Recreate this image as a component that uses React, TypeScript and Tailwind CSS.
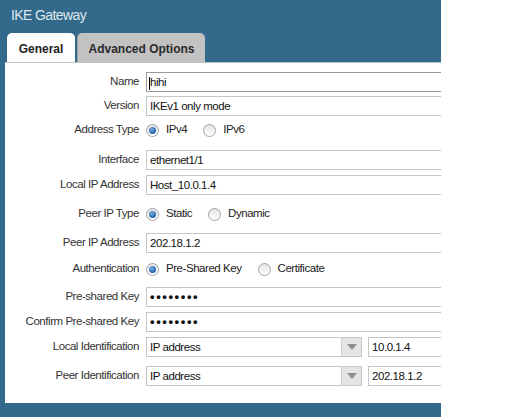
import React from "react";

const sans = "font-['Liberation_Sans',Arial,sans-serif]";

function Radio({ checked }: { checked?: boolean }) {
  return (
    <span className="flex h-[13px] w-[13px] shrink-0 items-center justify-center rounded-full border border-[#a2a2a2] bg-linear-to-b from-[#e4e4e4] to-white">
      {checked && (
        <span className="h-[7px] w-[7px] rounded-full bg-[radial-gradient(circle_at_40%_35%,#7fb0e0,#1d5ea8_70%)]" />
      )}
    </span>
  );
}

function RadioGroup({ options, value }: { options: string[]; value: string }) {
  return (
    <div className="flex items-center gap-[16px]">
      {options.map((o) => (
        <label key={o} className="flex items-center gap-[7px] text-[#222]">
          <Radio checked={o === value} />
          <span>{o}</span>
        </label>
      ))}
    </div>
  );
}

function Field({ children, focused }: { children?: React.ReactNode; focused?: boolean }) {
  return (
    <div
      className={`h-[20px] w-[320px] shrink-0 border bg-white pl-[3px] leading-[18px] text-[#111] ${
        focused ? "border-[#9a9a9a]" : "border-[#c6c6c6]"
      }`}
    >
      {children}
    </div>
  );
}

function Combo({ value, extra }: { value: string; extra: string }) {
  return (
    <div className="flex items-center gap-[6px]">
      <div className="flex h-[20px] w-[216px] shrink-0 border border-[#c6c6c6] bg-white">
        <span className="flex-1 pl-[3px] leading-[18px] text-[#111]">{value}</span>
        <span className="flex w-[20px] items-center justify-center border-l border-[#d0d0d0] bg-[#e4e4e4]">
          <svg width="10" height="6" viewBox="0 0 10 6">
            <path d="M0 0h10L5 6z" fill="#8e8e8e" />
          </svg>
        </span>
      </div>
      <Field>{extra}</Field>
    </div>
  );
}

function Row({ label, className = "", children }: { label: string; className?: string; children: React.ReactNode }) {
  return (
    <div className={`flex items-center ${className}`}>
      <span className="w-[134px] shrink-0 text-right text-[#333]">{label}</span>
      <div className="ml-[7px] flex items-center">{children}</div>
    </div>
  );
}

const dots = "\u2022\u2022\u2022\u2022\u2022\u2022\u2022\u2022";

export default function App() {
  return (
    <div className="h-[417px] w-[506px] bg-white">
      <div className={`flex h-[417px] w-[441px] flex-col overflow-hidden bg-[#33698a] ${sans}`}>
        {/* title bar + tabs */}
        <div className="h-[62px] shrink-0">
          <div className="h-[33px] pl-[11px] pt-[6px] text-[14px] leading-[18px] tracking-[-0.6px] text-[#dfe8ee]">
            IKE Gateway
          </div>
          <div className="flex h-[29px] items-end gap-[2px] pl-[7px] text-[12px] font-bold">
            <div className="flex h-[29px] w-[68px] items-center justify-center rounded-t-[5px] bg-white pt-[2px] text-[#1e1e1e]">
              General
            </div>
            <div className="flex h-[29px] w-[128px] items-center justify-center rounded-t-[5px] border-l border-[#9aa4aa] bg-[#c2c2c2] pt-[2px] text-[#2a2a2a]">
              Advanced Options
            </div>
          </div>
        </div>

        {/* form */}
        <div className="ml-[5px] flex flex-1 flex-col overflow-hidden border-t border-[#b9c6ce] bg-white text-[11.5px] tracking-[-0.45px]">
          <Row label="Name" className="mt-[9px]">
            <Field focused>
              <span className="relative">
                <span className="absolute -left-[1px] top-[1px] h-[13px] w-px bg-black" />
                hihi
              </span>
            </Field>
          </Row>
          <Row label="Version" className="mt-[4px]">
            <Field>IKEv1 only mode</Field>
          </Row>
          <Row label="Address Type" className="mt-[3px] h-[22px]">
            <RadioGroup options={["IPv4", "IPv6"]} value="IPv4" />
          </Row>
          <Row label="Interface" className="mt-[9px]">
            <Field>ethernet1/1</Field>
          </Row>
          <Row label="Local IP Address" className="mt-[5px]">
            <Field>Host_10.0.1.4</Field>
          </Row>
          <Row label="Peer IP Type" className="mt-[8px] h-[22px]">
            <RadioGroup options={["Static", "Dynamic"]} value="Static" />
          </Row>
          <Row label="Peer IP Address" className="mt-[8px]">
            <Field>202.18.1.2</Field>
          </Row>
          <Row label="Authentication" className="mt-[5px] h-[22px]">
            <RadioGroup options={["Pre-Shared Key", "Certificate"]} value="Pre-Shared Key" />
          </Row>
          <Row label="Pre-shared Key" className="mt-[7px]">
            <Field>
              <span className="text-[13px] font-bold tracking-[1.6px]">{dots}</span>
            </Field>
          </Row>
          <Row label="Confirm Pre-shared Key" className="mt-[5px]">
            <Field>
              <span className="text-[13px] font-bold tracking-[1.6px]">{dots}</span>
            </Field>
          </Row>
          <Row label="Local Identification" className="mt-[5px]">
            <Combo value="IP address" extra="10.0.1.4" />
          </Row>
          <Row label="Peer Identification" className="mt-[9px]">
            <Combo value="IP address" extra="202.18.1.2" />
          </Row>
        </div>
        <div className="h-[14px] shrink-0" />
      </div>
    </div>
  );
}
